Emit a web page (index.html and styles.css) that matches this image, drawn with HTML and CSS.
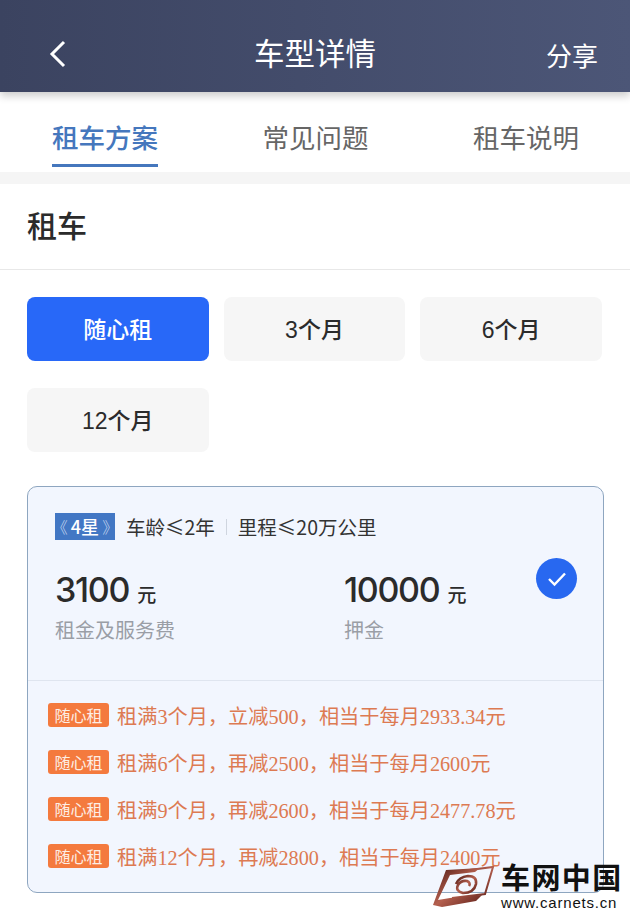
FILE: index.html
```html
<!DOCTYPE html>
<html lang="zh-CN">
<head>
  <meta charset="UTF-8" />
  <title>车型详情</title>
  <link rel="stylesheet" href="styles.css">
</head>
<body>

  <header class="topbar">
    <svg class="back" width="20" height="30" viewBox="0 0 20 30">
      <path d="M16 3 L4 15 L16 27" fill="none" stroke="#fff" stroke-width="3" />
    </svg>
    <h1>车型详情</h1>
    <span class="share">分享</span>
  </header>

  <nav class="tabs">
    <a class="tab active">租车方案</a>
    <a class="tab">常见问题</a>
    <a class="tab">租车说明</a>
  </nav>

  <h2 class="section-title">租车</h2>

  <div class="plans">
    <button class="plan selected">随心租</button>
    <button class="plan">3个月</button>
    <button class="plan">6个月</button>
    <button class="plan">12个月</button>
  </div>

  <section class="card">
    <div class="card-top">
      <div class="specs">
        <span class="stars"><i>《</i>4星<i class="end">》</i></span>
        <span>车龄≤2年</span>
        <i class="sep"></i>
        <span>里程≤20万公里</span>
      </div>
      <div class="prices">
        <div class="price">
          <p class="amount">3100<small>元</small></p>
          <p class="label">租金及服务费</p>
        </div>
        <div class="price">
          <p class="amount">10000<small>元</small></p>
          <p class="label">押金</p>
        </div>
      </div>
      <span class="check">
        <svg width="20" height="16" viewBox="0 0 20 16">
          <path d="M2 8 L7.5 13.5 L18 2.5" fill="none" stroke="#fff" stroke-width="2.4" />
        </svg>
      </span>
    </div>
    <ul class="offers">
      <li><span class="tag">随心租</span>租满3个月，立减500，相当于每月2933.34元</li>
      <li><span class="tag">随心租</span>租满6个月，再减2500，相当于每月2600元</li>
      <li><span class="tag">随心租</span>租满9个月，再减2600，相当于每月2477.78元</li>
      <li><span class="tag">随心租</span>租满12个月，再减2800，相当于每月2400元</li>
    </ul>
  </section>

  <!-- site mark sits over the bottom corner of the card -->
  <div class="mark">
    <svg width="70" height="55" viewBox="0 0 70 55">
      <defs>
        <linearGradient id="metal" x1="0" y1="0" x2="1" y2="1">
          <stop offset="0" stop-color="#4a1712" />
          <stop offset="0.5" stop-color="#b5604f" />
          <stop offset="1" stop-color="#5e1f18" />
        </linearGradient>
      </defs>
      <path d="M16 13 L63 7 L55 34 L22 38" fill="none" stroke="url(#metal)" stroke-width="2" />
      <path d="M16 10 L50 8 L45 12 L20 15 L8 40 L20 38 L52 35 L46 41 L12 47 L3 45 Z" fill="url(#metal)" />
      <path d="M26 24 Q29 17 38 16 Q47 16 46 24 Q44 33 33 33 Q25 31 28 25 Q31 20 37 21 Q41 23 39 26" fill="none" stroke="url(#metal)" stroke-width="2.6" />
    </svg>
    <div class="mark-text">
      <b>车网中国</b>
      <span>www.carnets.cn</span>
    </div>
  </div>

</body>
</html>
```

FILE: styles.css
```css
* {
  box-sizing: border-box;
}
html, body {
  height: 920px;
  overflow: hidden;
}
body {
  margin: 0;
  position: relative;
  background: #fff;
  color: #2b2b2b;
  font-family: "Liberation Sans", "Noto Sans CJK SC", sans-serif;
}
p, h1, h2, ul {
  margin: 0;
  padding: 0;
}

.topbar {
  height: 92px;
  padding: 16px 32px 0 48px;
  display: flex;
  align-items: center;
  justify-content: space-between;
  background: linear-gradient(90deg, #3b4360, #4c5677);
  box-shadow: 0 4px 8px rgba(0,0,0,0.2);
  color: #fff;
  position: relative;
}
.topbar h1 {
  font-size: 30.5px;
  font-weight: 400;
  line-height: 40px;
  margin-left: 16px;
}
.share {
  font-size: 26px;
}

.tabs {
  height: 92px;
  padding: 0 51px 12px 52px;
  display: flex;
  justify-content: space-between;
  border-bottom: 12px solid #f5f5f5;
}
.tab {
  height: 80px;
  padding-top: 28px;
  font-size: 26.5px;
  line-height: 38px;
  color: #666;
}
.tab.active {
  color: #4577bd;
  font-weight: 500;
  border-bottom: 3px solid #4577bd;
  height: 75px;
}

.section-title {
  height: 86px;
  padding: 0 27px;
  font-size: 30px;
  font-weight: 500;
  line-height: 86px;
  border-bottom: 1px solid #e8e8e8;
}

.plans {
  padding: 27px 28px 0 27px;
  display: grid;
  grid-template-columns: repeat(3, 1fr);
  gap: 27px 15px;
}
.plan {
  height: 64px;
  padding-bottom: 3px;
  border: none;
  border-radius: 8px;
  background: #f6f6f6;
  color: #2b2b2b;
  font-family: inherit;
  font-size: 23px;
  font-weight: 500;
}
.plan.selected {
  background: #2868f8;
  color: #fff;
}

.card {
  margin: 34px 26px 0 27px;
  height: 407px;
  border: 1px solid #8ea6c0;
  border-radius: 10px;
  background: #f2f6fe;
}
.card-top {
  height: 194px;
  padding: 26px 27px 0;
  position: relative;
  border-bottom: 1px solid #dfe5ef;
}
.specs {
  display: flex;
  align-items: center;
  gap: 11px;
  font-family: "Noto Sans CJK SC", sans-serif;
  font-size: 19.5px;
  line-height: 27px;
  color: #333;
}
.stars {
  width: 60px;
  height: 27px;
  display: flex;
  align-items: center;
  justify-content: center;
  background: #4277c4;
  color: #fff;
  font-size: 18px;
  font-weight: 500;
  white-space: nowrap;
}
/* the brackets only fill half of their em box, so pull the empty half out */
.stars i {
  margin: 0 3px 0 -8px;
  font-style: normal;
  font-weight: 300;
  font-size: 16px;
  color: #c5d6ef;
}
.stars i.end {
  margin: 0 -8px 0 3px;
}
.sep {
  width: 1px;
  height: 16px;
  background: #cfd5df;
}
.prices {
  margin-top: 28px;
  display: flex;
}
.price {
  flex: none;
  width: 289px;
}
.amount {
  font-family: Inter, sans-serif;
  font-size: 34px;
  font-weight: 500;
  line-height: 44px;
  letter-spacing: -1.3px;
}
.amount small {
  margin-left: 8px;
  font-family: "Noto Sans CJK SC", sans-serif;
  font-size: 19px;
  letter-spacing: 0;
}
.label {
  font-size: 20px;
  margin-top: -1px;
  color: #9a9ea6;
}
.check {
  position: absolute;
  top: 71px;
  right: 26px;
  width: 41px;
  height: 41px;
  border-radius: 50%;
  background: #2868f0;
  display: flex;
  align-items: center;
  justify-content: center;
}

.offers {
  list-style: none;
  padding: 22px 0 0 20px;
  display: flex;
  flex-direction: column;
  gap: 23px;
}
.offers li {
  height: 24px;
  display: flex;
  align-items: center;
  font-family: "Liberation Serif", "Noto Sans CJK SC", serif;
  font-size: 20.2px;
  color: #dd7a52;
  white-space: nowrap;
}
.tag {
  width: 61px;
  height: 24px;
  margin-right: 8px;
  border-radius: 3px;
  background: #f47a3e;
  color: #fdeee5;
  font-family: "Noto Sans CJK SC", sans-serif;
  font-size: 16px;
  line-height: 24px;
  text-align: center;
}

.mark {
  position: absolute;
  left: 430px;
  top: 860px;
  display: flex;
  gap: 1px;
}
.mark-text {
  padding-top: 4px;
  display: flex;
  flex-direction: column;
  color: #111;
}
.mark-text b {
  font-size: 29px;
  line-height: 30px;
  font-weight: 700;
  letter-spacing: 1.4px;
  white-space: nowrap;
}
.mark-text span {
  font-size: 15px;
  line-height: 18px;
  letter-spacing: 0.8px;
  white-space: nowrap;
}
```
